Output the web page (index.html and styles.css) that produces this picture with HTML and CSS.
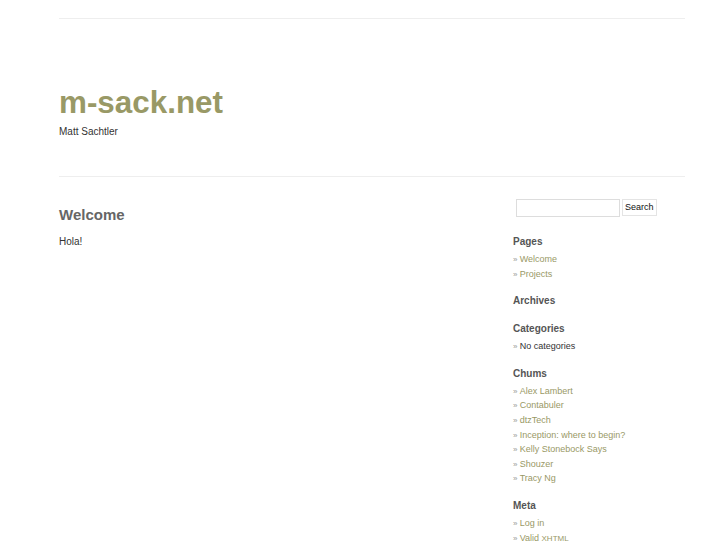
FILE: index.html
```html
<!DOCTYPE html>
<html>
<head>
<meta charset="utf-8">
<title>m-sack.net</title>
<link rel="stylesheet" href="styles.css">
</head>
<body>
<div class="page">
  <header class="header">
    <h1 class="site-title"><a href="#">m-sack.net</a></h1>
    <div class="tagline">Matt Sachtler</div>
  </header>
  <div class="main">
    <div class="content">
      <h2 class="post-title">Welcome</h2>
      <p class="post-text">Hola!</p>
    </div>
    <aside class="sidebar">
      <form class="search">
        <input class="search-input" type="text">
        <button class="search-btn" type="button">Search</button>
      </form>
      <div class="widget">
        <h3 class="widget-title">Pages</h3>
        <ul class="list">
          <li><a href="#">Welcome</a></li>
          <li><a href="#">Projects</a></li>
        </ul>
      </div>
      <div class="widget widget-empty">
        <h3 class="widget-title">Archives</h3>
      </div>
      <div class="widget">
        <h3 class="widget-title">Categories</h3>
        <ul class="list">
          <li class="plain">No categories</li>
        </ul>
      </div>
      <div class="widget">
        <h3 class="widget-title">Chums</h3>
        <ul class="list">
          <li><a href="#">Alex Lambert</a></li>
          <li><a href="#">Contabuler</a></li>
          <li><a href="#">dtzTech</a></li>
          <li><a href="#">Inception: where to begin?</a></li>
          <li><a href="#">Kelly Stonebock Says</a></li>
          <li><a href="#">Shouzer</a></li>
          <li><a href="#">Tracy Ng</a></li>
        </ul>
      </div>
      <div class="widget">
        <h3 class="widget-title">Meta</h3>
        <ul class="list">
          <li><a href="#">Log in</a></li>
          <li><a href="#">Valid <abbr>XHTML</abbr></a></li>
          <li><a href="#">XFN</a></li>
        </ul>
      </div>
    </aside>
  </div>
</div>
</body>
</html>
```

FILE: styles.css
```css
html, body {
  margin: 0;
  padding: 0;
  background: #fff;
}
body {
  font-family: "Liberation Sans", Arial, Helvetica, sans-serif;
  color: #333;
  font-size: 10px;
}
.page {
  width: 626px;
  margin-left: 59px;
  padding-top: 18px;
}
.header {
  border-top: 1px solid #eee;
  border-bottom: 1px solid #eee;
  padding: 66px 0 37px;
}
.site-title {
  margin: 0;
  font-size: 31.4px;
  line-height: 36px;
  font-weight: bold;
}
.site-title a {
  color: #999966;
  text-decoration: none;
}
.tagline {
  margin-top: 4px;
  font-size: 10px;
  line-height: 14px;
  color: #333;
}
.main {
  display: flex;
  justify-content: space-between;
  padding-top: 23px;
}
.content {
  width: 420px;
}
.post-title {
  margin: 5px 0 0;
  font-size: 15px;
  line-height: 20px;
  color: #666;
}
.post-text {
  margin: 10px 0 0;
  font-size: 10px;
  line-height: 14px;
  color: #333;
}
.sidebar {
  width: 172px;
}
.search {
  display: flex;
  align-items: flex-start;
  gap: 2px;
  margin: -1px 0 0 3px;
}
.search-input {
  width: 104px;
  height: 18px;
  box-sizing: border-box;
  border: 1px solid #ddd;
  padding: 0;
  margin: 0;
  background: #fff;
}
.search-btn {
  height: 17px;
  box-sizing: border-box;
  border: 1px solid #e4e4e4;
  background: #fff;
  font-family: "Liberation Sans", Arial, sans-serif;
  font-size: 9px;
  color: #111;
  padding: 0 2px;
  margin: 0;
  line-height: 15px;
}
.widget {
  margin-top: 18px;
}
.widget + .widget {
  margin-top: 12px;
}
.widget-empty {
  padding-bottom: 2px;
}
.widget-title {
  margin: 0;
  font-size: 10px;
  line-height: 14px;
  font-weight: bold;
  color: #555;
}
.list {
  list-style: none;
  margin: 3px 0 0;
  padding: 0 0 1px;
}
.list li {
  font-size: 9px;
  line-height: 14.6px;
  color: #999;
}
.list li::before {
  content: "\00BB\00A0";
  color: #999;
  font-size: 8px;
  line-height: 0;
}
.list a {
  color: #999966;
  text-decoration: none;
}
.list abbr {
  text-decoration: none;
  font-size: 8px;
  line-height: 0;
}
.list li.plain {
  color: #333;
}
```
